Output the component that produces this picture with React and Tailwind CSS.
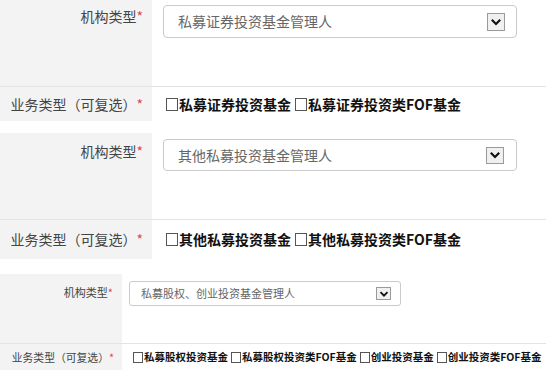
import React from 'react';

const sections = [
    {
        wrap: '',
        labelW: 'w-[152px]',
        row1H: 'h-[86px]',
        row2H: 'h-[34px]',
        labelText: 'text-[14px] leading-[20px] pr-[9px]',
        labelText2: 'text-[14px] pr-[9px]',
        labelTop: 'pt-[6px]',
        selectWrap: 'pl-[11px] pt-[5px]',
        select: 'w-[354px] h-[33px] pl-[14px] pr-[11px] text-[14px] rounded-[4px]',
        btn: 'w-[18px] h-[18px]',
        chev: 12,
        checks: 'pl-[14px] text-[14px]',
        gap: 'ml-[4px]',
        box: 'w-[12px] h-[13px]',
        value: '私募证券投资基金管理人',
        options: ['私募证券投资基金', '私募证券投资类FOF基金'],
    },
    {
        wrap: 'mt-[12px]',
        labelW: 'w-[152px]',
        row1H: 'h-[86px]',
        row2H: 'h-[39px]',
        labelText: 'text-[14px] leading-[20px] pr-[9px]',
        labelText2: 'text-[14px] pr-[9px]',
        labelTop: 'pt-[8px]',
        selectWrap: 'pl-[11px] pt-[6px]',
        select: 'w-[354px] h-[32px] pl-[14px] pr-[12px] text-[14px] rounded-[4px]',
        btn: 'w-[18px] h-[17px]',
        chev: 12,
        checks: 'pl-[14px] text-[14px]',
        gap: 'ml-[4px]',
        box: 'w-[12px] h-[13px]',
        value: '其他私募投资基金管理人',
        options: ['其他私募投资基金', '其他私募投资类FOF基金'],
    },
    {
        wrap: 'mt-[15px]',
        labelW: 'w-[122px]',
        row1H: 'h-[69px]',
        row2H: 'h-[26px]',
        labelText: 'text-[11px] leading-[16px] pr-[9px]',
        labelText2: 'text-[10.8px] pr-[8px]',
        labelTop: 'pt-[10px]',
        selectWrap: 'pl-[7px] pt-[7px]',
        select: 'w-[272px] h-[25px] pl-[11px] pr-[9px] text-[11px] rounded-[3px]',
        btn: 'w-[15px] h-[13px]',
        chev: 10,
        checks: 'pl-[11px] text-[10.5px]',
        gap: 'ml-[3px]',
        box: 'w-[10px] h-[11px]',
        value: '私募股权、创业投资基金管理人',
        options: ['私募股权投资基金', '私募股权投资类FOF基金', '创业投资基金', '创业投资类FOF基金'],
    },
];

const Chevron = ({ size }) => (
    <svg width={size} height={size} viewBox="0 0 10 10">
        <polyline points="1.5,3.2 5,6.7 8.5,3.2" fill="none" stroke="#111" strokeWidth="1.8" />
    </svg>
);

const Section = ({ s }) => (
    <div className={s.wrap}>
        {/* 机构类型 */}
        <div className="flex border-b border-[#e3e3e3]">
            <div className={`${s.labelW} ${s.row1H} ${s.labelTop} ${s.labelText} shrink-0 bg-[#f3f3f4] text-right text-[#444]`}>
                机构类型<span className="text-[#e2474b]">*</span>
            </div>
            <div className={`flex-1 ${s.selectWrap}`}>
                <div className={`${s.select} flex items-center justify-between border border-[#cacaca] bg-white text-[#666]`}>
                    <span>{s.value}</span>
                    <span className={`${s.btn} flex items-center justify-center border border-[#9a9a9a] bg-[#f0f0f0]`}>
                        <Chevron size={s.chev} />
                    </span>
                </div>
            </div>
        </div>
        {/* 业务类型 */}
        <div className="flex">
            <div className={`${s.labelW} ${s.row2H} ${s.labelText2} shrink-0 flex items-center justify-end bg-[#f3f3f4] text-[#444]`}>
                业务类型（可复选）<span className="text-[#e2474b]">*</span>
            </div>
            <div className={`flex-1 flex items-center ${s.checks} font-bold text-[#111] whitespace-nowrap`}>
                {s.options.map((o, i) => (
                    <span key={o} className={`flex items-center ${i > 0 ? s.gap : ''}`}>
                        <span className={`${s.box} inline-block border border-[#555] bg-white mr-px`} />
                        {o}
                    </span>
                ))}
            </div>
        </div>
    </div>
);

export default function App() {
    return (
        <div
            className="w-[546px] h-[378px] overflow-hidden bg-white"
            style={{ fontFamily: '"Noto Sans CJK SC", "Noto Sans", sans-serif' }}
        >
            {sections.map((s, i) => (
                <Section key={i} s={s} />
            ))}
        </div>
    );
}
